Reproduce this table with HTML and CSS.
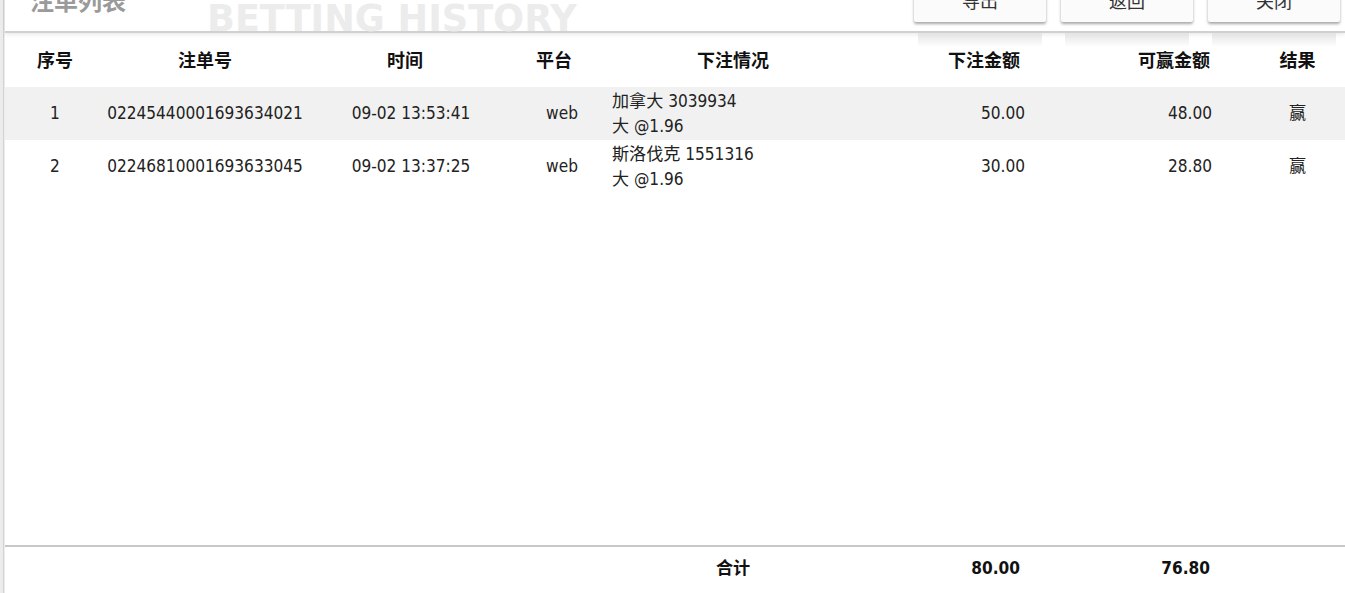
FILE: index.html
```html
<!DOCTYPE html>
<html lang="zh">
<head>
<meta charset="utf-8">
<title>注单列表</title>
<link rel="stylesheet" href="styles.css">
</head>
<body>
<div class="page">
  <div class="edge"></div>
  <div class="main">
    <div class="topbar">
      <div class="title">注单列表</div>
      <div class="watermark">BETTING HISTORY</div>
      <div class="actions">
        <div class="btn">导出</div>
        <div class="btn">返回</div>
        <div class="btn">关闭</div>
      </div>
    </div>
    <div class="list">
      <table class="grid">
        <colgroup>
          <col class="c1"><col class="c2"><col class="c3"><col class="c4"><col class="c5"><col class="c6"><col class="c7"><col class="c8">
        </colgroup>
        <thead>
          <tr>
            <th>序号</th>
            <th>注单号</th>
            <th>时间</th>
            <th>平台</th>
            <th>下注情况</th>
            <th class="amt">下注金额</th>
            <th class="win">可赢金额</th>
            <th>结果</th>
          </tr>
        </thead>
        <tbody>
          <tr class="odd">
            <td>1</td>
            <td>02245440001693634021</td>
            <td class="time">09-02 13:53:41</td>
            <td class="plat">web</td>
            <td class="info">加拿大 3039934<br>大 @1.96</td>
            <td class="amt">50.00</td>
            <td class="win">48.00</td>
            <td>赢</td>
          </tr>
          <tr>
            <td>2</td>
            <td>02246810001693633045</td>
            <td class="time">09-02 13:37:25</td>
            <td class="plat">web</td>
            <td class="info">斯洛伐克 1551316<br>大 @1.96</td>
            <td class="amt">30.00</td>
            <td class="win">28.80</td>
            <td>赢</td>
          </tr>
        </tbody>
      </table>
    </div>
    <table class="grid total">
      <colgroup>
        <col class="c1"><col class="c2"><col class="c3"><col class="c4"><col class="c5"><col class="c6"><col class="c7"><col class="c8">
      </colgroup>
      <tr>
        <td></td><td></td><td></td><td></td>
        <td>合计</td>
        <td class="amt">80.00</td>
        <td class="win">76.80</td>
        <td></td>
      </tr>
    </table>
  </div>
</div>
</body>
</html>
```

FILE: styles.css
```css
html, body {
  margin: 0;
  padding: 0;
  background: #fff;
}
body {
  font-family: "DejaVu Sans Condensed", "DejaVu Sans", "Noto Sans CJK SC", sans-serif;
  font-size: 17.1px;
  color: #222;
  overflow: hidden;
}
.page {
  display: flex;
  height: 593px;
  overflow: hidden;
}
.edge {
  width: 5px;
  flex: none;
  background: linear-gradient(to right, #ececec 0, #ececec 50%, #d2d2d2 70%, #e6e6e6 85%, #fafafa 100%);
}
.main {
  flex: 1;
  display: flex;
  flex-direction: column;
  min-width: 0;
}
.topbar {
  flex: none;
  height: 61px;
  margin-top: -30px;
  display: flex;
  align-items: flex-start;
  padding: 0 5px 0 25px;
  border-bottom: 2px solid #d0d0d0;
  box-shadow: 0 2px 4px rgba(0, 0, 0, 0.08);
  position: relative;
  z-index: 1;
}
.title {
  margin-top: 15px;
  font-family: "Noto Sans CJK SC", sans-serif;
  font-size: 24px;
  line-height: 30px;
  font-weight: bold;
  color: #9a9a9a;
}
.watermark {
  margin-top: 31px;
  margin-left: 81px;
  font-family: "DejaVu Sans", sans-serif;
  font-weight: bold;
  font-size: 36.6px;
  line-height: 36px;
  color: #ececec;
  white-space: nowrap;
}
.actions {
  margin-left: auto;
  display: flex;
  gap: 15px;
  margin-top: 8px;
}
.btn {
  position: relative;
  width: 132px;
  height: 44px;
  display: flex;
  align-items: center;
  justify-content: center;
  background: #fbfbfb;
  border-radius: 2px;
  box-shadow: 0 2px 3px rgba(0, 0, 0, 0.35);
  font-family: "Noto Sans CJK SC", sans-serif;
  font-size: 18px;
  color: #333;
}
.btn::after {
  content: "";
  position: absolute;
  left: 4px;
  right: 4px;
  top: calc(100% + 11px);
  height: 14px;
  background: linear-gradient(to bottom, #e4e4e4, rgba(255, 255, 255, 0));
}
.list {
  flex: 1;
  min-height: 0;
}
.grid {
  width: 100%;
  border-collapse: collapse;
  table-layout: fixed;
}
.c1 { width: 100px; }
.c2 { width: 200px; }
.c3 { width: 200px; }
.c4 { width: 98px; }
.c5 { width: 260px; }
.c6 { width: 167px; }
.c7 { width: 220px; }
.c8 { width: 95px; }
.grid th {
  height: 52px;
  padding: 0 0 2px;
  font-family: "Noto Sans CJK SC", sans-serif;
  font-size: 18px;
  font-weight: bold;
  color: #111;
  text-align: center;
  vertical-align: middle;
}
.grid td {
  height: 53px;
  padding: 0;
  text-align: center;
  vertical-align: middle;
  line-height: 25px;
  white-space: nowrap;
}
.grid tr.odd td {
  background: #f1f1f1;
}
.grid th.amt { text-align: right; padding-right: 10px; }
.grid th.win { text-align: right; padding-right: 40px; }
.grid td.time { padding-left: 12px; }
.grid td.plat { padding-left: 16px; }
.grid td.info { text-align: left; padding-left: 9px; }
.grid td.amt { text-align: right; padding-right: 5px; }
.grid td.win { text-align: right; padding-right: 38px; }
.total {
  flex: none;
  border-top: 2px solid #c8c8c8;
}
.total td {
  height: 42px;
  padding-bottom: 4px;
  font-weight: bold;
  color: #111;
}
.total td.amt { padding-right: 10px; }
.total td.win { padding-right: 40px; }
```
